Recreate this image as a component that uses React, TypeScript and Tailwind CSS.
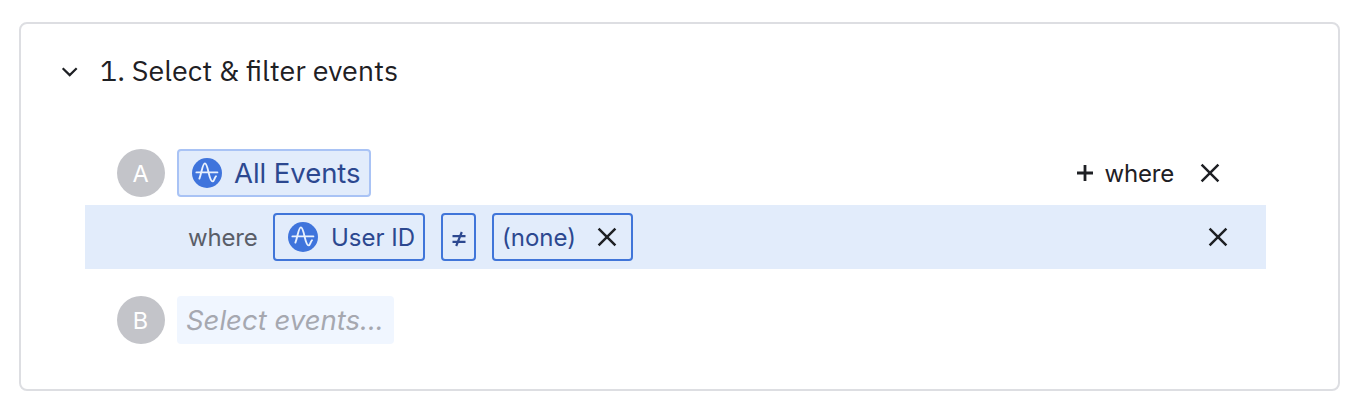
import type { ReactNode } from "react";

function Cross() {
  return (
    <svg width="20" height="20" viewBox="0 0 20 20" fill="none" stroke="#1e2024" strokeWidth="2.5" className="shrink-0">
      <path d="M1.6 1.6 18.4 18.4M18.4 1.6 1.6 18.4" />
    </svg>
  );
}

function AmplitudeLogo() {
  return (
    <svg width="30" height="30" viewBox="0 0 30 30" fill="none" className="shrink-0">
      <circle cx="15" cy="15" r="15" fill="#3f74dc" />
      <path
        d="M4.4 14.4H25.4M7.4 20.6C9.6 15.5 10.4 5.4 12.9 5.4C16.2 5.4 16.8 23.4 20.6 23.4C22.4 23.4 22.4 19.4 24 18.2"
        stroke="#e9f1fd"
        strokeWidth="1.9"
        strokeLinecap="round"
      />
    </svg>
  );
}

function Badge({ children }: { children: ReactNode }) {
  return (
    <div className="flex size-12 shrink-0 items-center justify-center rounded-full bg-[#c3c4c9] pt-px pr-px text-[23.5px] leading-none text-white">
      {children}
    </div>
  );
}

export default function App() {
  return (
    <main className="h-[412px] w-[1362px] bg-white pt-[22px] pl-[19px] font-[family-name:Inter,sans-serif] whitespace-nowrap text-[#1e2024]">
      <section className="h-[369px] w-[1321px] rounded-lg border-2 border-[#dddee2]">
        <header className="flex h-[94px] items-center pl-[40px]">
          <svg width="18" height="12" viewBox="0 0 18 12" fill="none" stroke="#1e2024" strokeWidth="2.2" className="mt-[2px]">
            <path d="M1.7 2.2 8.7 9.1 15.7 2.2" />
          </svg>
          <h1 className="ml-[21px] font-[family-name:'IBM_Plex_Sans','Noto_Sans_CJK_SC',sans-serif] text-[28.7px] leading-[40px]">
            1. Select &amp; filter events
          </h1>
        </header>

        <div className="mt-[31px] flex h-12 items-center pl-24">
          <Badge>A</Badge>
          <button className="ml-3 flex h-12 w-[194px] items-center rounded-[4px] border-2 border-[#a9c3f5] bg-[#e2ecfb] pl-[13px]">
            <AmplitudeLogo />
            <span className="ml-3 pt-[2px] text-[27.5px] leading-none tracking-[-0.05px] text-[#2c4890]">All Events</span>
          </button>
          <div className="mr-[118px] ml-auto flex items-center">
            <svg width="16" height="16" viewBox="0 0 16 16" stroke="#1e2024" strokeWidth="2.8">
              <path d="M8 0V16M0 8H16" />
            </svg>
            <span className="mr-[26px] ml-3 pt-[2px] text-[24px] leading-none tracking-[-0.2px]">where</span>
            <Cross />
          </div>
        </div>

        <div className="mt-2 ml-16 flex h-16 w-[1181px] items-center bg-[#e2ecfb] pl-[103px] text-[24px] leading-none text-[#2c4890]">
          <span className="w-[85px] pt-[2px] tracking-[-0.2px] text-[#5a5e68]">where</span>
          <button className="flex h-12 w-[152px] items-center rounded-[4px] border-2 border-[#4075d9] pl-[13px]">
            <AmplitudeLogo />
            <span className="ml-[13px] pt-[2px]">User ID</span>
          </button>
          <button className="ml-4 flex h-12 w-[35px] items-center justify-center rounded-[4px] border-2 border-[#4075d9]">
            <svg width="14" height="16" viewBox="0 0 14 16" fill="none" stroke="#2c4890" strokeWidth="2.2" className="mt-[3px]">
              <path d="M.5 5.2H13.5M.5 10.8H13.5M9.8 1 4.2 15" />
            </svg>
          </button>
          <button className="ml-4 flex h-12 w-[141px] items-center justify-between rounded-[4px] border-2 border-[#4075d9] pr-[14px] pl-[8px]">
            <span className="pt-[2px]">(none)</span>
            <Cross />
          </button>
          <div className="mr-[38px] ml-auto">
            <Cross />
          </div>
        </div>

        <div className="mt-[27px] flex h-12 items-center pl-24">
          <Badge>B</Badge>
          <button className="ml-3 flex h-12 w-[217px] items-center rounded-[4px] bg-[#f0f6ff] pt-[2px] pl-[9px] text-[27.5px] leading-none text-[#a6a8b0] italic">
            Select events...
          </button>
        </div>
      </section>
    </main>
  );
}
